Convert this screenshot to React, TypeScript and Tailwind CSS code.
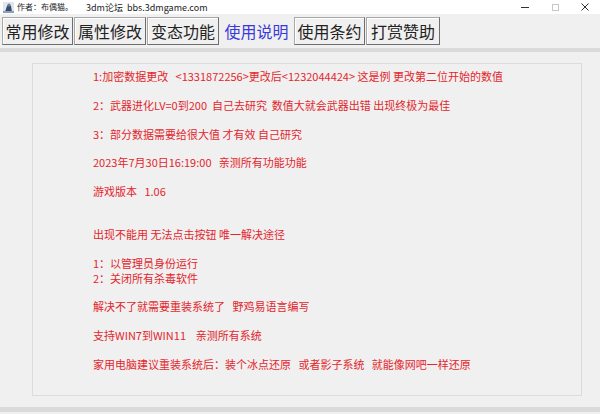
import React from "react";

const tabs = [
  { label: "常用修改", w: "w-[71px]" },
  { label: "属性修改", w: "w-[72px]" },
  { label: "变态功能", w: "w-[72px]" },
  { label: "使用说明", w: "w-[73px]", active: true },
  { label: "使用条约", w: "w-[71px]" },
  { label: "打赏赞助", w: "w-[74px]" },
];

const blocks: (string | null)[] = [
  "1:加密数据更改   <1331872256>更改后<1232044424> 这是例 更改第二位开始的数值",
  null,
  "2：武器进化LV=0到200  自己去研究  数值大就会武器出错 出现终极为最佳",
  null,
  "3：部分数据需要给很大值 才有效 自己研究",
  null,
  "2023年7月30日16:19:00   亲测所有功能功能",
  null,
  "游戏版本   1.06",
  null,
  null,
  "出现不能用 无法点击按钮 唯一解决途径",
  null,
  "1：以管理员身份运行\n2：关闭所有杀毒软件",
  null,
  "解决不了就需要重装系统了   野鸡易语言编写",
  null,
  "支持WIN7到WIN11    亲测所有系统",
  null,
  "家用电脑建议重装系统后：装个冰点还原   或者影子系统   就能像网吧一样还原",
];

export default function App() {
  return (
    <div
      className="w-[600px] h-[414px] bg-[#f0f0f0] overflow-hidden flex flex-col relative"
      style={{ fontFamily: '"Noto Sans CJK SC", "Noto Sans", sans-serif' }}
    >
      {/* title bar */}
      <div className="h-[14px] bg-white flex items-center relative shrink-0">
        <svg width="11" height="11" viewBox="0 0 11 11" className="ml-[3px]">
          <rect width="11" height="11" fill="#dfe6ee" />
          <path d="M2 10 L4 4 L6 2 L8 4 L9 10 Z" fill="#3a4b66" />
          <circle cx="6" cy="3" r="1.6" fill="#6b7d99" />
          <path d="M0 9 L11 9 L11 11 L0 11 Z" fill="#8aa0c0" />
        </svg>
        <span className="ml-[3px] text-[8px] leading-none text-[#222] whitespace-pre">
          作者：布偶猫。
        </span>
        <span className="ml-[13px] text-[9px] leading-none text-[#222] whitespace-pre">
          3dm论坛  bbs.3dmgame.com
        </span>
        <div className="absolute right-0 top-0 h-[14px] flex items-center">
          <div className="w-[30px] flex justify-center">
            <div className="w-[8px] h-[1px] bg-[#333]" />
          </div>
          <div className="w-[30px] flex justify-center">
            <div className="w-[7px] h-[7px] border border-[#c8c8c8]" />
          </div>
          <div className="w-[30px] flex justify-center">
            <svg width="8" height="8" viewBox="0 0 8 8">
              <path d="M0.5 0.5 L7.5 7.5 M7.5 0.5 L0.5 7.5" stroke="#333" strokeWidth="1" />
            </svg>
          </div>
        </div>
      </div>

      {/* tabs */}
      <div className="flex mt-[3px] ml-[2px] h-[28px] shrink-0">
        {tabs.map((t) =>
          t.active ? (
            <div
              key={t.label}
              className={`${t.w} h-[28px] flex items-center justify-center text-[16px] leading-none text-[#3a3ad8] mr-[1px]`}
            >
              {t.label}
            </div>
          ) : (
            <div
              key={t.label}
              className={`${t.w} h-[28px] flex items-center justify-center text-[16px] leading-none text-[#222] border border-t-[#a8a8a8] border-l-[#a8a8a8] border-r-[#6e6e6e] border-b-[#6e6e6e] shadow-[inset_1px_1px_0_#ffffff] bg-[#f0f0f0] mr-[1px]`}
            >
              {t.label}
            </div>
          )
        )}
      </div>

      {/* separator bar */}
      <div className="mt-[3px] h-[4px] bg-[#dadada] shrink-0" />

      {/* panel */}
      <div className="ml-[32px] mt-[11px] w-[550px] h-[333px] border border-[#dcdcdc] shrink-0 pt-[5px] pl-[60px]">
        {blocks.map((l, i) =>
          l === null ? (
            <div key={i} className="h-[14.4px]" />
          ) : (
            <div
              key={i}
              className="leading-[14.4px] text-[11px] text-[#e3262c] whitespace-pre"
            >
              {l}
            </div>
          )
        )}
      </div>

      {/* bottom bar */}
      <div className="mt-[11px] h-[5px] bg-[#dadada] shrink-0" />
    </div>
  );
}
